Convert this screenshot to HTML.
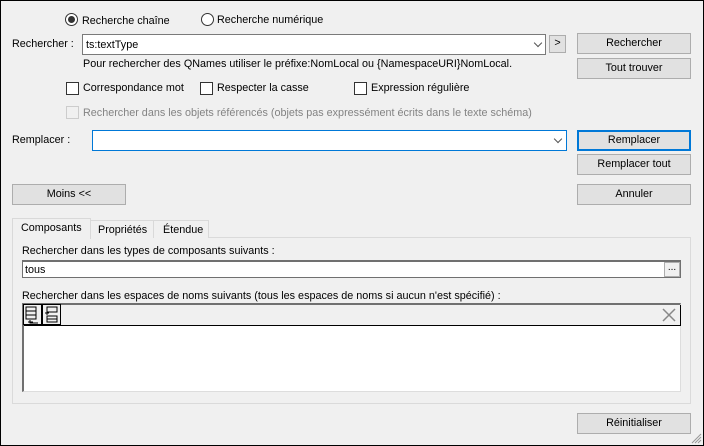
<!DOCTYPE html>
<html><head><meta charset="utf-8"><style>
*{box-sizing:border-box;margin:0;padding:0}
body{width:704px;height:446px;background:#f0f0f0;font-family:"Liberation Sans",sans-serif;font-size:10.8px;color:#000;position:relative;overflow:hidden}
.frame{position:absolute;left:0;top:0;width:704px;height:446px;border:1px solid #000}
.a{position:absolute;white-space:nowrap}
.t{line-height:14px}
.btn{position:absolute;background:#e1e1e1;border:1px solid #adadad;text-align:center;line-height:18px}
.inp{position:absolute;background:#fff;border:1px solid #7a7a7a}
.cb{position:absolute;width:13px;height:13px;border:1px solid #333;background:#fff}
.rd{position:absolute;width:13px;height:13px;border:1px solid #333;border-radius:50%;background:#fff}
.chev{position:absolute;width:6px;height:6px;border-right:1px solid #555;border-bottom:1px solid #555;transform:rotate(45deg)}
</style></head><body>
<div class="frame"></div>
<div class="rd" style="left:65px;top:13px"><div style="position:absolute;left:2px;top:2px;width:7px;height:7px;border-radius:50%;background:#333"></div></div>
<div class="a t" style="left:82px;top:14px">Recherche chaîne</div>
<div class="rd" style="left:201px;top:13px"></div>
<div class="a t" style="left:217px;top:13px">Recherche numérique</div>

<div class="a t" style="left:12px;top:37px">Rechercher :</div>
<div class="inp" style="left:82px;top:34px;width:464px;height:21px"><span class="a t" style="left:3px;top:3px">ts:textType</span><div class="chev" style="left:452px;top:5px"></div></div>
<div class="btn" style="left:549px;top:35px;width:17px;height:18px;line-height:15px">&gt;</div>
<div class="btn" style="left:577px;top:33px;width:114px;height:21px">Rechercher</div>
<div class="btn" style="left:577px;top:58px;width:114px;height:21px">Tout trouver</div>
<div class="a t" style="left:83px;top:57px">Pour rechercher des QNames utiliser le préfixe:NomLocal ou {NamespaceURI}NomLocal.</div>

<div class="cb" style="left:66px;top:82px"></div><div class="a t" style="left:83px;top:81px">Correspondance mot</div>
<div class="cb" style="left:200px;top:82px"></div><div class="a t" style="left:217px;top:81px">Respecter la casse</div>
<div class="cb" style="left:354px;top:82px"></div><div class="a t" style="left:371px;top:81px">Expression régulière</div>
<div class="cb" style="left:66px;top:106px;border-color:#ccc;background:#f0f0f0"></div><div class="a t" style="left:83px;top:106px;color:#838383">Rechercher dans les objets référencés (objets pas expressément écrits dans le texte schéma)</div>

<div class="a t" style="left:12px;top:133px">Remplacer :</div>
<div class="inp" style="left:92px;top:130px;width:475px;height:21px;border-color:#0078d7"><div class="chev" style="left:462px;top:5px"></div></div>
<div class="btn" style="left:577px;top:130px;width:114px;height:21px;border:2px solid #0078d7;line-height:16px">Remplacer</div>
<div class="btn" style="left:577px;top:154px;width:114px;height:21px">Remplacer tout</div>
<div class="btn" style="left:12px;top:184px;width:114px;height:21px">Moins &lt;&lt;</div>
<div class="btn" style="left:577px;top:184px;width:114px;height:21px">Annuler</div>

<div style="position:absolute;left:12px;top:237px;width:679px;height:167px;border:1px solid #dadada;background:#f0f0f0"></div>
<div style="position:absolute;left:90px;top:220px;width:64px;height:18px;border:1px solid #d9d9d9;border-bottom:none;background:#f0f0f0"></div>
<div style="position:absolute;left:153px;top:220px;width:56px;height:18px;border:1px solid #d9d9d9;border-bottom:none;background:#f0f0f0"></div>
<div style="position:absolute;left:12px;top:218px;width:79px;height:21px;border:1px solid #d9d9d9;border-bottom:none;background:#f0f0f0"></div>
<div class="a t" style="left:21px;top:221px">Composants</div>
<div class="a t" style="left:98px;top:223px">Propriétés</div>
<div class="a t" style="left:163px;top:223px">Étendue</div>

<div class="a t" style="left:22px;top:244px">Rechercher dans les types de composants suivants :</div>
<div class="inp" style="left:22px;top:260px;width:659px;height:18px;border-color:#707070;border-top:2px solid #707070"><span class="a t" style="left:2px;top:1px">tous</span>
<div class="btn" style="left:641px;top:0px;width:16px;height:15px;line-height:10px;font-size:10px;background:#f0f0f0">...</div></div>

<div class="a t" style="left:22px;top:289px">Rechercher dans les espaces de noms suivants (tous les espaces de noms si aucun n'est spécifié) :</div>
<div style="position:absolute;left:22px;top:303px;width:659px;height:89px;background:#fff;border:1px solid #ddd;border-top:2px solid #707070;border-left:2px solid #707070"></div>
<div style="position:absolute;left:24px;top:305px;width:657px;height:21px;background:#f0f0f0;border-bottom:1px solid #000;border-right:1px solid #000"></div>
<svg class="a" style="left:23px;top:304px" width="40" height="22" viewBox="0 0 40 22">
<rect x="0.5" y="0.5" width="18" height="20" fill="none" stroke="#000"/>
<rect x="19.5" y="0.5" width="18" height="20" fill="none" stroke="#000"/>
<path d="M3 3h10v12H3zM3 7h10M3 11h10M7 16v3h8M5 18h5" fill="none" stroke="#000"/>
<path d="M24 3h10v5H24zM24 12h10v6H24zM24 15h10M22 9h4M24 7v4" fill="none" stroke="#000"/>
</svg>
<svg class="a" style="left:659px;top:305px" width="20" height="20"><path d="M4 4L16 16M16 4L4 16" stroke="#888" stroke-width="1.5"/></svg>

<div class="btn" style="left:577px;top:413px;width:114px;height:21px">Réinitialiser</div>
<svg class="a" style="left:690px;top:432px" width="12" height="12"><path d="M11 2L2 11M11 5L5 11M11 8L8 11" stroke="#999"/></svg>
</body></html>
